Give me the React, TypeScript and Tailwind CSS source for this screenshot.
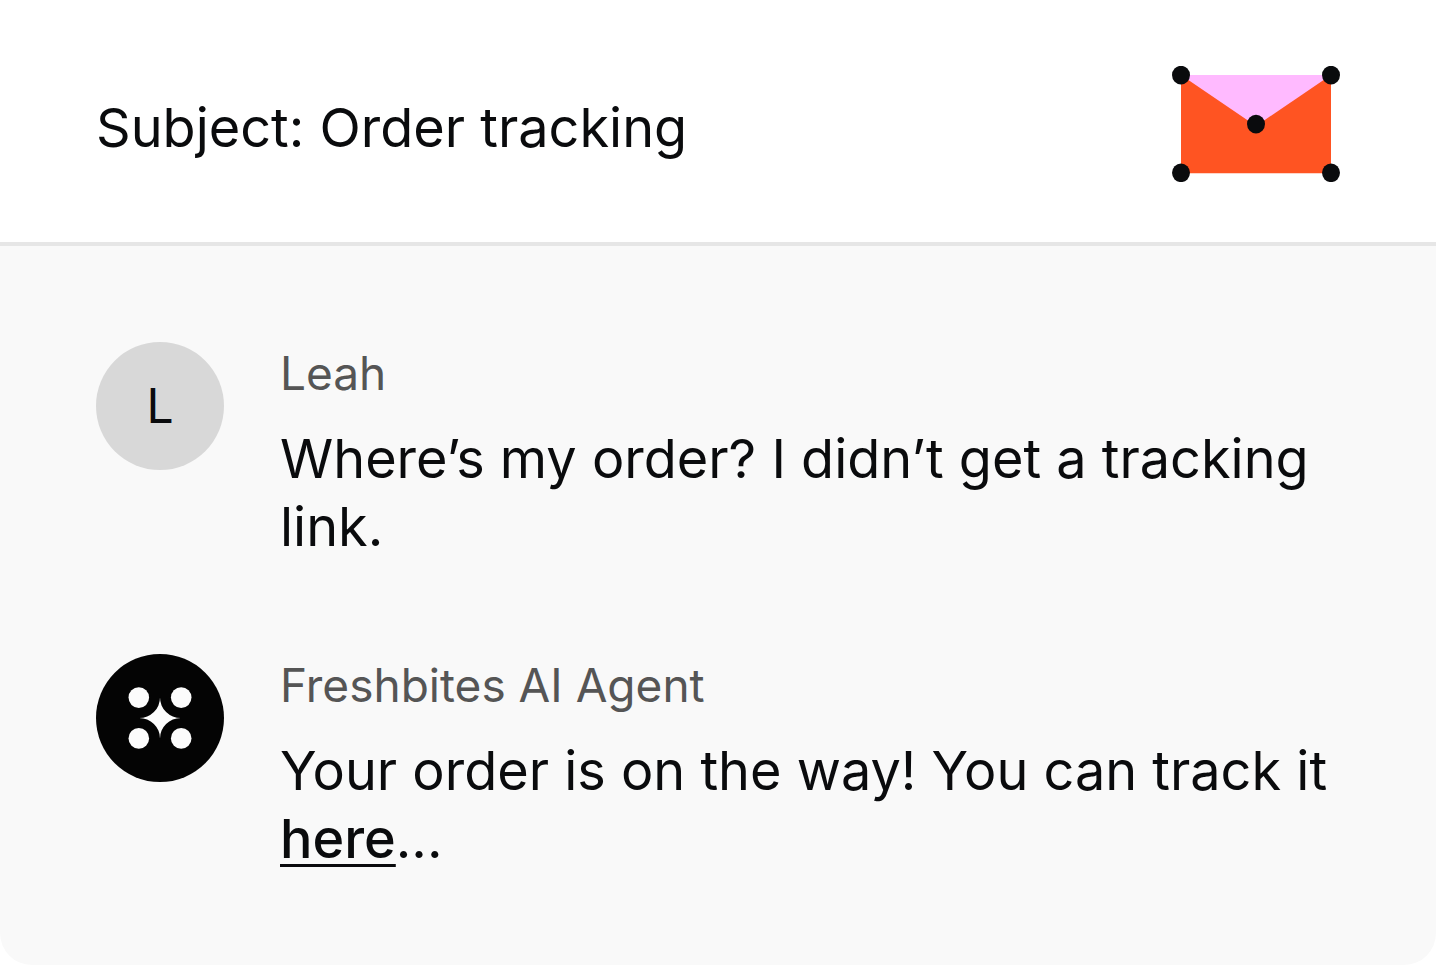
import type { ReactNode } from "react";

function EnvelopeIcon() {
  return (
    <svg width="168" height="116" viewBox="0 0 168 116" aria-hidden="true" className="shrink-0">
      <path d="M9 9h150v98.3H9z" fill="#ff5422" />
      <path d="M9 9h150L84 60z" fill="#ffbaff" />
      <g fill="#0a0b0d">
        <ellipse cx="9" cy="9.1" rx="9" ry="9.3" />
        <ellipse cx="159" cy="9.1" rx="9" ry="9.3" />
        <ellipse cx="84" cy="58.1" rx="9" ry="9.3" />
        <ellipse cx="9" cy="106.8" rx="9" ry="9.3" />
        <ellipse cx="159" cy="106.8" rx="9" ry="9.3" />
      </g>
    </svg>
  );
}

function AgentIcon() {
  return (
    <svg width="64" height="64" viewBox="0 0 64 64" fill="#fcfcfc" aria-hidden="true">
      <circle cx="10.8" cy="11.6" r="10.3" />
      <circle cx="53.2" cy="11.6" r="10.3" />
      <circle cx="10.8" cy="52.4" r="10.3" />
      <circle cx="53.2" cy="52.4" r="10.3" />
      <path d="M32 11.6A20.8 20.4 0 0 0 52.8 32A20.8 20.4 0 0 0 32 52.4A20.8 20.4 0 0 0 11.2 32A20.8 20.4 0 0 0 32 11.6Z" />
    </svg>
  );
}

type MessageProps = {
  name: string;
  avatar: ReactNode;
  avatarClass: string;
  children: ReactNode;
};

function Message({ name, avatar, avatarClass, children }: MessageProps) {
  return (
    <article className="flex gap-14">
      <div
        className={`flex size-32 shrink-0 items-center justify-center rounded-full text-5xl ${avatarClass}`}
      >
        {avatar}
      </div>
      <div className="min-w-0 flex-1">
        <h2 className="text-[46px] leading-[62px] text-[#555]">{name}</h2>
        <p className="mt-[21px] text-[54px] leading-[68px]">{children}</p>
      </div>
    </article>
  );
}

export default function App() {
  return (
    <main className="min-h-screen overflow-hidden rounded-b-[32px] bg-[#f9f9f9] font-['Inter',sans-serif] text-[#0a0b0d]">
      <header className="flex items-center justify-between border-b-4 border-[#e6e6e6] bg-white px-24 pt-[66px] pb-[60px]">
        <h1 className="pt-2 text-[54px] leading-[68px]">Subject: Order tracking</h1>
        <EnvelopeIcon />
      </header>
      <section className="flex flex-col gap-[93px] px-24 pt-24 pb-[92px]">
        <Message name="Leah" avatar="L" avatarClass="bg-[#d8d8d8]">
          Where’s my order? I didn’t get a tracking link.
        </Message>
        <Message name="Freshbites AI Agent" avatar={<AgentIcon />} avatarClass="bg-[#040404]">
          Your order is on the way! You can track it{" "}
          <a href="#tracking" className="font-medium underline decoration-[3px] underline-offset-[6px]">
            here
          </a>
          ...
        </Message>
      </section>
    </main>
  );
}
